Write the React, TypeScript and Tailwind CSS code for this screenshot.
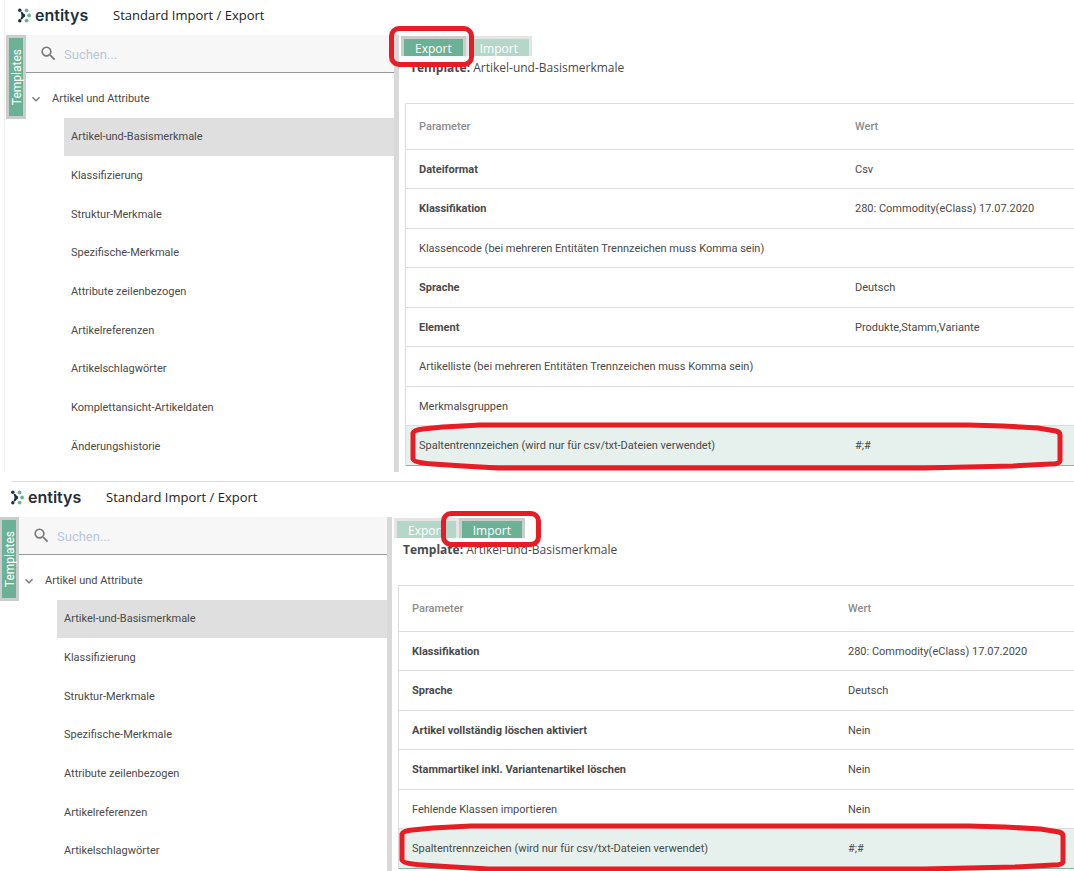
import { MdExpandMore, MdSearch } from "react-icons/md";

type Mode = "export" | "import";

interface Param {
  name: string;
  value?: string;
  bold?: boolean;
  marked?: boolean;
}

const TEMPLATES = [
  "Artikel-und-Basismerkmale",
  "Klassifizierung",
  "Struktur-Merkmale",
  "Spezifische-Merkmale",
  "Attribute zeilenbezogen",
  "Artikelreferenzen",
  "Artikelschlagwörter",
  "Komplettansicht-Artikeldaten",
  "Änderungshistorie",
];

const EXPORT_PARAMS: Param[] = [
  { name: "Dateiformat", value: "Csv", bold: true },
  { name: "Klassifikation", value: "280: Commodity(eClass) 17.07.2020", bold: true },
  { name: "Klassencode (bei mehreren Entitäten Trennzeichen muss Komma sein)" },
  { name: "Sprache", value: "Deutsch", bold: true },
  { name: "Element", value: "Produkte,Stamm,Variante", bold: true },
  { name: "Artikelliste (bei mehreren Entitäten Trennzeichen muss Komma sein)" },
  { name: "Merkmalsgruppen" },
  { name: "Spaltentrennzeichen (wird nur für csv/txt-Dateien verwendet)", value: "#;#", marked: true },
];

const IMPORT_PARAMS: Param[] = [
  { name: "Klassifikation", value: "280: Commodity(eClass) 17.07.2020", bold: true },
  { name: "Sprache", value: "Deutsch", bold: true },
  { name: "Artikel vollständig löschen aktiviert", value: "Nein", bold: true },
  { name: "Stammartikel inkl. Variantenartikel löschen", value: "Nein", bold: true },
  { name: "Fehlende Klassen importieren", value: "Nein" },
  { name: "Spaltentrennzeichen (wird nur für csv/txt-Dateien verwendet)", value: "#;#", marked: true },
];

function Logo() {
  return (
    <div className="flex w-[95px] items-center gap-1">
      <svg className="shrink-0" width="13" height="15" viewBox="0 0 13 15" aria-hidden="true">
        <g fill="#1f2f3c">
          <circle cx="1.8" cy="2.2" r="1.7" />
          <path d="M2.6 4.4 4 3.4 7 7.5 4 11.8 2.6 10.8 3.8 7.5Z" />
          <circle cx="5.4" cy="7.5" r="1.8" />
          <circle cx="1.8" cy="12.8" r="1.7" />
        </g>
        <g fill="#6bb196">
          <circle cx="8.6" cy="2.4" r="1.9" />
          <circle cx="8.6" cy="12.6" r="1.9" />
          <circle cx="11.1" cy="7.5" r="1.9" />
        </g>
      </svg>
      <span className="font-[Inter,sans-serif] text-[16px] leading-5 font-semibold text-[#1f2f3c]">entitys</span>
    </div>
  );
}

function RowMarker({ className }: { className: string }) {
  return (
    <svg
      className={`pointer-events-none absolute h-[43px] overflow-visible ${className}`}
      viewBox="0 0 647 43"
      preserveAspectRatio="none"
      fill="none"
      stroke="#e81c24"
      strokeWidth="5"
      strokeLinejoin="round"
      aria-hidden="true"
    >
      <path
        vectorEffect="non-scaling-stroke"
        d="M0 8 Q1 5 10 4 L30 2 L67 0 H555 L590 1 L625 3 L643 6 Q647 7 647 10 V36 Q646 39 638 39 L600 41 L555 42 L510 43 H85 L50 41 L20 39 Q1 38 0 34 Z"
      />
    </svg>
  );
}

function ModeTab({ label, active, marker }: { label: string; active: boolean; marker: string }) {
  return (
    <div className="relative">
      <button
        type="button"
        className={`h-5 border-x-[3px] border-t-[3px] border-[#cccccc] bg-[#6bb196] px-[11px] text-[12px] leading-5 text-white ${active ? "" : "opacity-50"}`}
      >
        {label}
      </button>
      {active && <span className={`pointer-events-none absolute z-10 rounded-[10px] border-5 border-[#e81c24] ${marker}`} />}
    </div>
  );
}

function ParamTable({ params, marker }: { params: Param[]; marker: string }) {
  return (
    <div className="relative ml-[6px] border-l border-[#dddddd]">
      <table className="w-full table-fixed border-separate border-spacing-0 text-left text-[11px]">
        <thead>
          <tr className="h-[47px] text-[#8c8c8c]">
            <th className="w-[449px] border-y border-[#dddddd] pt-[2px] pl-[13px] font-medium">Parameter</th>
            <th className="border-y border-[#dddddd] pt-[2px] font-medium">Wert</th>
          </tr>
        </thead>
        <tbody>
          {params.map((p) => (
            <tr key={p.name} className={`h-[39px] even:h-[40px] ${p.marked ? "bg-[#e6f1ed]" : ""}`}>
              <td className={`border-b pt-[2px] pl-[13px] ${p.marked ? "border-[#85b5a3]" : "border-[#dddddd]"} ${p.bold ? "font-bold" : ""}`}>
                {p.name}
              </td>
              <td className={`border-b pt-[2px] ${p.marked ? "border-[#85b5a3]" : "border-[#dddddd]"}`}>{p.value}</td>
            </tr>
          ))}
        </tbody>
      </table>
      <RowMarker className={marker} />
    </div>
  );
}

interface PanelProps {
  mode: Mode;
  templates: string[];
  params: Param[];
  className: string;
  tabMarker: string;
  rowMarker: string;
}

function Panel({ mode, templates, params, className, tabMarker, rowMarker }: PanelProps) {
  return (
    <section className={className}>
      <header className="flex h-[35px] items-start pt-[5px] pl-3">
        <Logo />
        <h1 className="font-['Open_Sans',sans-serif] text-[13px] leading-5 text-[#222222]">Standard Import / Export</h1>
      </header>

      <div className="flex">
        <button
          type="button"
          className="flex h-[84px] w-5 shrink-0 items-center justify-center border-3 border-[#cccccc] bg-[#6bb196] pl-[2px] text-[12px] leading-3 text-white"
        >
          <span className="rotate-180 [writing-mode:vertical-rl]">Templates</span>
        </button>

        <aside className="w-[368px] shrink-0">
          <label className="flex h-[38px] items-center gap-[6px] border-b border-[#999999] bg-[#f7f7f7] pl-[13px]">
            <MdSearch className="size-[19px] shrink-0 text-[#777777]" />
            <input
              type="search"
              aria-label="Suchen"
              placeholder="Suchen..."
              className="w-full bg-transparent pt-[2px] text-[13px] leading-5 outline-none placeholder:text-[#b9c7d9]"
            />
          </label>
          <button type="button" className="flex h-[45px] w-full items-center gap-2 pt-[7px] pl-[2px] text-[11px]">
            <MdExpandMore className="size-4 text-[#777777]" />
            Artikel und Attribute
          </button>
          <ul className="pl-[38px] text-[11px]">
            {templates.map((name, i) => (
              <li key={name} className={`flex h-[39px] nth-[3n+1]:h-[38px] ${i === 0 ? "bg-[#dfdfdf]" : ""}`}>
                <button type="button" className="w-full pt-px pl-[7px] text-left">
                  {name}
                </button>
              </li>
            ))}
          </ul>
          <div className={mode === "export" ? "h-[6px]" : "h-px"} />
        </aside>

        <div className="w-[5px] shrink-0 bg-[#d9d9d9]" />

        <main className="min-w-0 flex-1">
          <div className="flex h-5 pl-[2px] font-['Open_Sans',sans-serif]">
            <ModeTab label="Export" active={mode === "export"} marker={tabMarker} />
            <ModeTab label="Import" active={mode === "import"} marker={tabMarker} />
          </div>
          <p className="h-12 pt-[3px] pl-[11px] font-['Open_Sans',sans-serif] text-[12px] leading-5">
            <b>Template:</b> Artikel-und-Basismerkmale
          </p>
          <ParamTable params={params} marker={rowMarker} />
        </main>
      </div>
    </section>
  );
}

export default function App() {
  return (
    <div className="overflow-hidden bg-white font-[Roboto,sans-serif] text-[#4a4a4a]">
      <Panel
        mode="export"
        templates={TEMPLATES}
        params={EXPORT_PARAMS}
        className="ml-1 border-l border-[#eeeeee] pl-px"
        tabMarker="-top-[9px] -left-3 h-[41px] w-[85px]"
        rowMarker="bottom-[-2px] left-[7px] w-[calc(100%-21px)]"
      />
      <hr className="mt-[9px] ml-3 border-[#dddddd]" />
      <Panel
        mode="import"
        templates={TEMPLATES.slice(0, 7)}
        params={IMPORT_PARAMS}
        className="-ml-px"
        tabMarker="-top-[6px] -left-[18px] h-[36px] w-[100px]"
        rowMarker="bottom-0 left-[3px] w-[calc(100%-14px)]"
      />
    </div>
  );
}
